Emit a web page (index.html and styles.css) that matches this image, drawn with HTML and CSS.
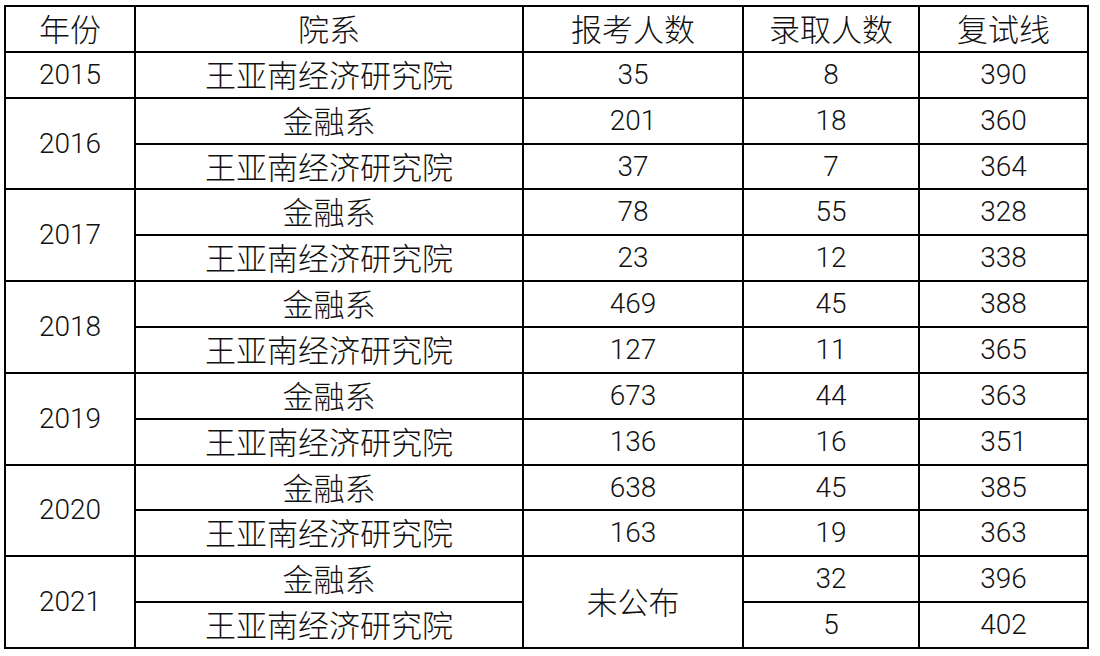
FILE: index.html
```html
<!DOCTYPE html>
<html lang="zh">
<head>
<meta charset="utf-8">
<link rel="stylesheet" href="styles.css">
</head>
<body>
<table class="grid">
  <colgroup>
    <col class="c-year"><col class="c-dept"><col class="c-apply"><col class="c-admit"><col class="c-line">
  </colgroup>
  <thead>
    <tr><th>年份</th><th>院系</th><th>报考人数</th><th>录取人数</th><th>复试线</th></tr>
  </thead>
  <tbody>
    <tr><td class="num">2015</td><td>王亚南经济研究院</td><td class="num">35</td><td class="num">8</td><td class="num">390</td></tr>
    <tr><td class="num" rowspan="2">2016</td><td>金融系</td><td class="num">201</td><td class="num">18</td><td class="num">360</td></tr>
    <tr><td>王亚南经济研究院</td><td class="num">37</td><td class="num">7</td><td class="num">364</td></tr>
    <tr><td class="num" rowspan="2">2017</td><td>金融系</td><td class="num">78</td><td class="num">55</td><td class="num">328</td></tr>
    <tr><td>王亚南经济研究院</td><td class="num">23</td><td class="num">12</td><td class="num">338</td></tr>
    <tr><td class="num" rowspan="2">2018</td><td>金融系</td><td class="num">469</td><td class="num">45</td><td class="num">388</td></tr>
    <tr><td>王亚南经济研究院</td><td class="num">127</td><td class="num">11</td><td class="num">365</td></tr>
    <tr><td class="num" rowspan="2">2019</td><td>金融系</td><td class="num">673</td><td class="num">44</td><td class="num">363</td></tr>
    <tr><td>王亚南经济研究院</td><td class="num">136</td><td class="num">16</td><td class="num">351</td></tr>
    <tr><td class="num" rowspan="2">2020</td><td>金融系</td><td class="num">638</td><td class="num">45</td><td class="num">385</td></tr>
    <tr><td>王亚南经济研究院</td><td class="num">163</td><td class="num">19</td><td class="num">363</td></tr>
    <tr><td class="num" rowspan="2">2021</td><td>金融系</td><td rowspan="2">未公布</td><td class="num">32</td><td class="num">396</td></tr>
    <tr><td>王亚南经济研究院</td><td class="num">5</td><td class="num">402</td></tr>
  </tbody>
</table>
</body>
</html>
```

FILE: styles.css
```css
html, body {
  margin: 0;
  background: #ffffff;
}
body {
  padding: 5px 0 0 4px;
}
.grid {
  border-collapse: collapse;
  table-layout: fixed;
  width: 1085px;
  color: #111;
  font-family: "Noto Sans CJK SC", "Noto Sans", sans-serif;
  font-weight: 300;
  font-size: 31px;
}
.c-year { width: 130px; }
.c-dept { width: 388px; }
.c-apply { width: 220px; }
.c-admit { width: 176px; }
.c-line { width: 169px; }
.grid tr {
  height: 45.86px;
}
.grid th,
.grid td {
  border: 2px solid #000;
  padding: 0 0 3px;
  text-align: center;
  vertical-align: middle;
  line-height: 1;
  font-weight: 300;
}
.grid .num {
  font-family: "Roboto", "Liberation Sans", sans-serif;
  font-weight: 300;
  font-size: 28px;
  padding: 0;
}
```
